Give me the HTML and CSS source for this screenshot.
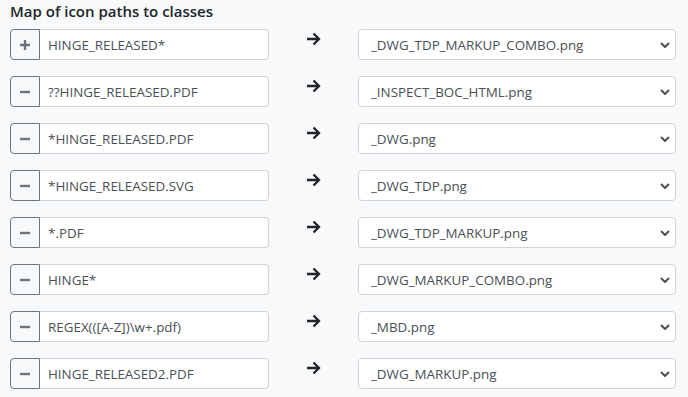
FILE: index.html
```html
<!DOCTYPE html>
<html lang="en">
<head>
    <meta charset="UTF-8" />
    <meta name="viewport" content="width=device-width, initial-scale=1.0" />
    <title>Icon Map</title>
    <link rel="stylesheet" href="styles.css">
</head>
<body>
    <div class="icon-map">
        <h6 class="icon-map__title">Map of icon paths to classes</h6>

        <div class="icon-map__rows">
            <!-- first row holds the add button -->
            <div class="map-row">
                <div class="input-group">
                    <button class="btn-icon" type="button" title="Add">
                        <svg width="12" height="12" viewBox="0 0 12 12"><path d="M6 1v10M1 6h10" stroke="currentColor" stroke-width="2.4" fill="none"/></svg>
                    </button>
                    <input class="path-input" type="text" value="HINGE_RELEASED*" />
                </div>
                <div class="map-arrow">
                    <svg width="15" height="14" viewBox="0 0 15 14"><path d="M1 7h12M7.5 1.5L13 7l-5.5 5.5" stroke="currentColor" stroke-width="2.3" fill="none"/></svg>
                </div>
                <select class="class-select"><option>_DWG_TDP_MARKUP_COMBO.png</option></select>
            </div>

            <div class="map-row">
                <div class="input-group">
                    <button class="btn-icon" type="button" title="Remove">
                        <svg width="12" height="12" viewBox="0 0 12 12"><path d="M1 6h10" stroke="currentColor" stroke-width="2.4" fill="none"/></svg>
                    </button>
                    <input class="path-input" type="text" value="??HINGE_RELEASED.PDF" />
                </div>
                <div class="map-arrow">
                    <svg width="15" height="14" viewBox="0 0 15 14"><path d="M1 7h12M7.5 1.5L13 7l-5.5 5.5" stroke="currentColor" stroke-width="2.3" fill="none"/></svg>
                </div>
                <select class="class-select"><option>_INSPECT_BOC_HTML.png</option></select>
            </div>

            <div class="map-row">
                <div class="input-group">
                    <button class="btn-icon" type="button" title="Remove">
                        <svg width="12" height="12" viewBox="0 0 12 12"><path d="M1 6h10" stroke="currentColor" stroke-width="2.4" fill="none"/></svg>
                    </button>
                    <input class="path-input" type="text" value="*HINGE_RELEASED.PDF" />
                </div>
                <div class="map-arrow">
                    <svg width="15" height="14" viewBox="0 0 15 14"><path d="M1 7h12M7.5 1.5L13 7l-5.5 5.5" stroke="currentColor" stroke-width="2.3" fill="none"/></svg>
                </div>
                <select class="class-select"><option>_DWG.png</option></select>
            </div>

            <div class="map-row">
                <div class="input-group">
                    <button class="btn-icon" type="button" title="Remove">
                        <svg width="12" height="12" viewBox="0 0 12 12"><path d="M1 6h10" stroke="currentColor" stroke-width="2.4" fill="none"/></svg>
                    </button>
                    <input class="path-input" type="text" value="*HINGE_RELEASED.SVG" />
                </div>
                <div class="map-arrow">
                    <svg width="15" height="14" viewBox="0 0 15 14"><path d="M1 7h12M7.5 1.5L13 7l-5.5 5.5" stroke="currentColor" stroke-width="2.3" fill="none"/></svg>
                </div>
                <select class="class-select"><option>_DWG_TDP.png</option></select>
            </div>

            <div class="map-row">
                <div class="input-group">
                    <button class="btn-icon" type="button" title="Remove">
                        <svg width="12" height="12" viewBox="0 0 12 12"><path d="M1 6h10" stroke="currentColor" stroke-width="2.4" fill="none"/></svg>
                    </button>
                    <input class="path-input" type="text" value="*.PDF" />
                </div>
                <div class="map-arrow">
                    <svg width="15" height="14" viewBox="0 0 15 14"><path d="M1 7h12M7.5 1.5L13 7l-5.5 5.5" stroke="currentColor" stroke-width="2.3" fill="none"/></svg>
                </div>
                <select class="class-select"><option>_DWG_TDP_MARKUP.png</option></select>
            </div>

            <div class="map-row">
                <div class="input-group">
                    <button class="btn-icon" type="button" title="Remove">
                        <svg width="12" height="12" viewBox="0 0 12 12"><path d="M1 6h10" stroke="currentColor" stroke-width="2.4" fill="none"/></svg>
                    </button>
                    <input class="path-input" type="text" value="HINGE*" />
                </div>
                <div class="map-arrow">
                    <svg width="15" height="14" viewBox="0 0 15 14"><path d="M1 7h12M7.5 1.5L13 7l-5.5 5.5" stroke="currentColor" stroke-width="2.3" fill="none"/></svg>
                </div>
                <select class="class-select"><option>_DWG_MARKUP_COMBO.png</option></select>
            </div>

            <div class="map-row">
                <div class="input-group">
                    <button class="btn-icon" type="button" title="Remove">
                        <svg width="12" height="12" viewBox="0 0 12 12"><path d="M1 6h10" stroke="currentColor" stroke-width="2.4" fill="none"/></svg>
                    </button>
                    <input class="path-input" type="text" value="REGEX(([A-Z])\w+.pdf)" />
                </div>
                <div class="map-arrow">
                    <svg width="15" height="14" viewBox="0 0 15 14"><path d="M1 7h12M7.5 1.5L13 7l-5.5 5.5" stroke="currentColor" stroke-width="2.3" fill="none"/></svg>
                </div>
                <select class="class-select"><option>_MBD.png</option></select>
            </div>

            <div class="map-row">
                <div class="input-group">
                    <button class="btn-icon" type="button" title="Remove">
                        <svg width="12" height="12" viewBox="0 0 12 12"><path d="M1 6h10" stroke="currentColor" stroke-width="2.4" fill="none"/></svg>
                    </button>
                    <input class="path-input" type="text" value="HINGE_RELEASED2.PDF" />
                </div>
                <div class="map-arrow">
                    <svg width="15" height="14" viewBox="0 0 15 14"><path d="M1 7h12M7.5 1.5L13 7l-5.5 5.5" stroke="currentColor" stroke-width="2.3" fill="none"/></svg>
                </div>
                <select class="class-select"><option>_DWG_MARKUP.png</option></select>
            </div>
        </div>
    </div>
</body>
</html>
```

FILE: styles.css
```css
/* General styles */
body {
    margin: 0;
    background: #f8f9fa;
    font-family: "Open Sans", "Noto Sans", sans-serif;
    color: #212529;
}

.icon-map {
    padding: 1px 12px 0 10px;
}

.icon-map__title {
    margin: 1px 0 9px;
    font-size: 15px;
    font-weight: 600;
    line-height: 18px;
}

.icon-map__rows {
    display: flex;
    flex-direction: column;
    gap: 16px;
}

.map-row {
    display: grid;
    grid-template-columns: 259px 89px 318px;
    height: 31px;
}

.input-group {
    display: flex;
}

.btn-icon {
    width: 30px;
    height: 31px;
    padding: 0;
    display: flex;
    align-items: center;
    justify-content: center;
    background: transparent;
    color: #6c757d;
    border: 1px solid #6c757d;
    border-radius: 4px 0 0 4px;
}

.path-input {
    flex: 1;
    min-width: 0;
    height: 31px;
    box-sizing: border-box;
    margin: 0;
    padding: 4px 8px;
    font-family: inherit;
    font-size: 13.4px;
    color: #495057;
    background: #fff;
    border: 1px solid #ced4da;
    border-left: none;
    border-radius: 0 4px 4px 0;
    outline: none;
}

.map-arrow {
    display: flex;
    justify-content: center;
    padding-top: 3px;
    color: #212529;
}

.class-select {
    height: 31px;
    box-sizing: border-box;
    margin: 0;
    padding: 4px 24px 4px 12px;
    font-family: inherit;
    font-size: 13.4px;
    color: #495057;
    background-color: #fff;
    background-image: url("data:image/svg+xml,%3csvg xmlns='http://www.w3.org/2000/svg' viewBox='0 0 10 6'%3e%3cpath fill='none' stroke='%23495057' stroke-width='2' d='M1 1l4 4 4-4'/%3e%3c/svg%3e");
    background-repeat: no-repeat;
    background-position: right 5px center;
    background-size: 10px 6px;
    border: 1px solid #ced4da;
    border-radius: 4px;
    appearance: none;
}
```
